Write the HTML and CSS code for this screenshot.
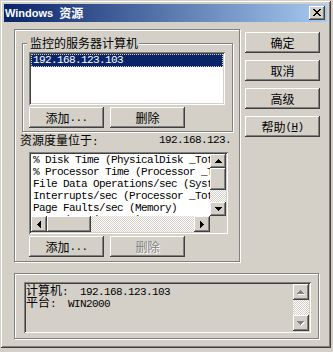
FILE: index.html
```html
<!DOCTYPE html>
<html>
<head>
<meta charset="utf-8">
<link rel="stylesheet" href="styles.css">
</head>
<body>
<div class="window">
  <div class="titlebar">
    <span class="title-en">Windows</span><span class="title-cn">资源</span>
    <span class="closebtn raised">
      <svg width="8" height="7" viewBox="0 0 8 7" shape-rendering="crispEdges"><path d="M0 0h2v1H0zM6 0h2v1H6zM1 1h2v1H1zM5 1h2v1H5zM2 2h4v1H2zM3 3h2v1H3zM2 4h4v1H2zM1 5h2v1H1zM5 5h2v1H5zM0 6h2v1H0zM6 6h2v1H6z" fill="#000"/></svg>
    </span>
  </div>
  <div class="body">
    <div class="main">
      <div class="panel etched">
        <div class="group etched">
          <div class="group-label">监控的服务器计算机</div>
          <div class="listbox list1">
            <div class="row sel m">192.168.123.103</div>
          </div>
          <div class="btnrow">
            <div class="btn raised">添加<span class="m">...</span></div>
            <div class="btn raised">删除</div>
          </div>
        </div>
        <div class="reslabel"><span class="reskey">资源度量位于<span class="m">:</span></span><span class="resval m">192.168.123.</span></div>
        <div class="listbox list2">
          <div class="list2-text m">
            <div class="line">% Disk Time (PhysicalDisk _Total)</div>
            <div class="line">% Processor Time (Processor _Total)</div>
            <div class="line">File Data Operations/sec (System)</div>
            <div class="line">Interrupts/sec (Processor _Total)</div>
            <div class="line">Page Faults/sec (Memory)</div>
            <div class="line">Pages/sec (Memory)</div>
          </div>
          <div class="vscroll">
            <div class="arrow v raised"><svg width="7" height="4" viewBox="0 0 7 4" shape-rendering="crispEdges"><path d="M3 0h1v1H3zM2 1h3v1H2zM1 2h5v1H1zM0 3h7v1H0z" fill="#000"/></svg></div>
            <div class="thumb-v raised"></div>
            <div class="track"></div>
            <div class="arrow v raised"><svg width="7" height="4" viewBox="0 0 7 4" shape-rendering="crispEdges"><path d="M0 0h7v1H0zM1 1h5v1H1zM2 2h3v1H2zM3 3h1v1H3z" fill="#000"/></svg></div>
          </div>
          <div class="hscroll">
            <div class="arrow h raised"><svg width="4" height="7" viewBox="0 0 4 7" shape-rendering="crispEdges"><path d="M3 0h1v7H3zM2 1h1v5H2zM1 2h1v3H1zM0 3h1v1H0z" fill="#000"/></svg></div>
            <div class="thumb-h raised"></div>
            <div class="track"></div>
            <div class="arrow h raised"><svg width="4" height="7" viewBox="0 0 4 7" shape-rendering="crispEdges"><path d="M0 0h1v7H0zM1 1h1v5H1zM2 2h1v3H2zM3 3h1v1H3z" fill="#000"/></svg></div>
          </div>
          <div class="corner"></div>
        </div>
        <div class="btnrow btnrow2">
          <div class="btn raised">添加<span class="m">...</span></div>
          <div class="btn raised disabled">删除</div>
        </div>
      </div>
      <div class="buttons">
        <div class="btn raised">确定</div>
        <div class="btn raised">取消</div>
        <div class="btn raised">高级</div>
        <div class="btn raised">帮助<span class="m">(<u>H</u>)</span></div>
      </div>
    </div>
    <div class="infopanel etched">
      <div class="infobox">
        <div class="infotext">
          <div class="line">计算机<span class="m">:  192.168.123.103</span></div>
          <div class="line">平台<span class="m">:  WIN2000</span></div>
        </div>
        <div class="vscroll2">
          <div class="arrow v raised"><svg width="8" height="5" viewBox="0 0 8 5" shape-rendering="crispEdges"><path d="M4 1h1v1H4zM3 2h3v1H3zM2 3h5v1H2zM1 4h7v1H1z" fill="#fff"/><path d="M3 0h1v1H3zM2 1h3v1H2zM1 2h5v1H1zM0 3h7v1H0z" fill="#808080"/></svg></div>
          <div class="track"></div>
          <div class="arrow v raised"><svg width="8" height="5" viewBox="0 0 8 5" shape-rendering="crispEdges"><path d="M1 1h7v1H1zM2 2h5v1H2zM3 3h3v1H3zM4 4h1v1H4z" fill="#fff"/><path d="M0 0h7v1H0zM1 1h5v1H1zM2 2h3v1H2zM3 3h1v1H3z" fill="#808080"/></svg></div>
        </div>
      </div>
    </div>
  </div>
</div>
</body>
</html>
```

FILE: styles.css
```css
* { box-sizing: border-box; }
html, body { margin: 0; padding: 0; background: #d4d0c8; }
body {
  font-family: "Noto Sans CJK SC", sans-serif;
  font-size: 12px;
  line-height: 12px;
  color: #000;
}
.m {
  font-family: "Liberation Mono", "Noto Sans CJK SC", monospace;
  font-size: 11px;
  letter-spacing: -0.6px;
}
.window {
  width: 331px;
  height: 348px;
  padding: 4px;
  background: #d4d0c8;
  box-shadow: inset 1px 1px #d4d0c8, inset -1px -1px #404040, inset 2px 2px #fff, inset -2px -2px #808080;
}
.raised {
  background: #d4d0c8;
  box-shadow: inset -1px -1px #404040, inset 1px 1px #fff, inset -2px -2px #808080, inset 2px 2px #d4d0c8;
}
.etched {
  border: 1px solid #808080;
  box-shadow: inset 1px 1px #fff, 1px 1px #fff;
}
.titlebar {
  height: 18px;
  display: flex;
  align-items: center;
  padding: 0 2px 0 1px;
  background: linear-gradient(to right, #0a246a, #a6caf0);
  color: #fff;
  font-weight: bold;
}
.title-en {
  font-family: "Liberation Sans", sans-serif;
  font-size: 11px;
  font-weight: bold;
}
.title-cn {
  margin-left: 6px;
  font-weight: bold;
}
.closebtn {
  margin-left: auto;
  width: 16px;
  height: 14px;
  display: flex;
  align-items: center;
  justify-content: center;
  padding-bottom: 1px;
}
.closebtn svg { display: block; }
.body { padding: 7px 0 0 10px; }
.main { display: flex; gap: 5px; }
.panel {
  width: 226px;
  height: 233px;
  padding-top: 13px;
}
.group {
  position: relative;
  width: 211px;
  height: 89px;
  margin-left: 7px;
  padding: 8px 0 0 6px;
}
.group-label {
  position: absolute;
  top: -7px;
  left: 4px;
  padding: 0 1px 0 3px;
  background: #d4d0c8;
  height: 12px;
  line-height: 12px;
  white-space: nowrap;
}
.listbox {
  background: #fff;
  padding: 2px;
  box-shadow: inset 1px 1px #808080, inset -1px -1px #fff, inset 2px 2px #404040, inset -2px -2px #d4d0c8;
}
.list1 { width: 196px; height: 53px; }
.row {
  height: 13px;
  line-height: 13px;
  padding-left: 2px;
  white-space: nowrap;
}
.sel {
  background: #0a246a;
  color: #fff;
  outline: 1px dotted #d8d8b0;
  outline-offset: -1px;
}
.btnrow { display: flex; gap: 6px; margin-top: 2px; }
.btn {
  width: 75px;
  height: 21px;
  display: flex;
  align-items: center;
  justify-content: center;
  white-space: nowrap;
  line-height: 12px;
}
.btn.disabled {
  color: #808080;
  text-shadow: 1px 1px #fff;
}
.reslabel {
  display: flex;
  margin: 2px 0 0 5px;
  height: 12px;
  white-space: nowrap;
}
.reskey { width: 139px; }
.resval { overflow: hidden; width: 72px; }
.list2 {
  width: 199px;
  height: 82px;
  margin: 6px 0 0 14px;
  display: grid;
  grid-template-columns: 1fr 16px;
  grid-template-rows: 1fr 16px;
}
.list2-text {
  overflow: hidden;
  padding-left: 2px;
  min-width: 0;
}
.line {
  height: 12px;
  line-height: 12px;
  white-space: pre;
}
.vscroll { display: flex; flex-direction: column; }
.hscroll { display: flex; }
.corner { background: #d4d0c8; }
.track {
  flex: 1;
  background: repeating-conic-gradient(#d4d0c8 0 25%, #fff 0 50%) 0 0 / 2px 2px;
}
.arrow {
  display: flex;
  align-items: center;
  justify-content: center;
  flex: none;
}
.arrow svg { display: block; }
.arrow.v { height: 14px; width: 16px; }
.arrow.h { width: 16px; height: 16px; }
.thumb-v { height: 22px; flex: none; }
.thumb-h { width: 44px; flex: none; }
.btnrow2 { margin: 2px 0 0 14px; }
.buttons {
  display: flex;
  flex-direction: column;
  gap: 7px;
  margin-top: 3px;
}
.infopanel {
  width: 305px;
  height: 66px;
  margin-top: 11px;
  padding: 8px 0 0 9px;
}
.infobox {
  width: 287px;
  height: 51px;
  padding: 2px;
  display: flex;
  background: #d4d0c8;
  box-shadow: inset 1px 1px #808080, inset -1px -1px #fff, inset 2px 2px #404040, inset -2px -2px #d4d0c8;
}
.infotext { flex: 1; }
.vscroll2 { width: 16px; display: flex; flex-direction: column; }
.vscroll2 .arrow.v { height: 16px; }
```
